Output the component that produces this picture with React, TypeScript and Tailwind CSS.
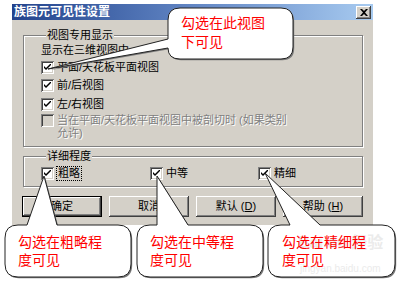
import React from "react";

const CJK = "font-['Liberation_Sans','Noto_Sans_CJK_SC',sans-serif]";

function Check({ on = true, disabled = false }: { on?: boolean; disabled?: boolean }) {
  return (
    <span
      className={`w-[13px] h-[13px] shrink-0 flex items-center justify-center shadow-[inset_1px_1px_0_#808080,inset_-1px_-1px_0_#fff,inset_2px_2px_0_#404040,inset_-2px_-2px_0_#d4d0c8] ${
        disabled ? "bg-[#d4d0c8]" : "bg-white"
      }`}
    >
      {on && (
        <svg width="7" height="7" viewBox="0 0 7 7">
          <path d="M0 2 L0 4 L2 6 L7 1 L7 -1 L2 4 Z" fill="#000" />
        </svg>
      )}
    </span>
  );
}

function Row({ label, h }: { label: string; h: string }) {
  return (
    <div className={`flex items-center gap-[3px] ${h}`}>
      <Check />
      <span>{label}</span>
    </div>
  );
}

function Btn({ children, def = false }: { children: React.ReactNode; def?: boolean }) {
  return (
    <div
      className={`w-[80px] h-[21px] flex items-center justify-center bg-[#d4d0c8] ${
        def
          ? "border border-black shadow-[inset_-1px_-1px_0_#404040,inset_1px_1px_0_#fff,inset_-2px_-2px_0_#808080]"
          : "shadow-[inset_-1px_-1px_0_#404040,inset_1px_1px_0_#fff,inset_-2px_-2px_0_#808080]"
      }`}
    >
      {children}
    </div>
  );
}

const callouts = [
  "M180 8 H281 Q293 8 293 20 V47 Q293 59 281 59 H180 Q168 59 168 48 L48 69 L168 39 V20 Q168 8 180 8 Z",
  "M18 225 H27 L44 176 L57 225 H118 Q131 225 131 238 V264 Q131 277 118 277 H18 Q5 277 5 264 V238 Q5 225 18 225 Z",
  "M150 225 H157 L157 176 L188 225 H250 Q263 225 263 238 V264 Q263 277 250 277 H150 Q137 277 137 264 V238 Q137 225 150 225 Z",
  "M281 225 H290 L265 173 L320 225 H382 Q395 225 395 238 V264 Q395 277 382 277 H281 Q268 277 268 264 V238 Q268 225 281 225 Z",
];

export default function App() {
  return (
    <div className={`relative w-[413px] h-[287px] bg-white overflow-hidden text-[11px] leading-[13px] text-black ${CJK}`}>
      {/* dialog */}
      <div className="ml-[12px] pt-[4px] w-[361px]">
        <div className="h-[221px] bg-[#d4d0c8] flex flex-col">
          <div className="h-[16px] flex items-center justify-between pl-[2px] pr-[2px] bg-gradient-to-r from-[#23438c] via-[#6286c4] to-[#a8cbf0]">
            <span className="text-white font-bold text-[12px] leading-[14px]">族图元可见性设置</span>
            <span className="w-[15px] h-[13px] flex items-center justify-center bg-[#d4d0c8] shadow-[inset_-1px_-1px_0_#404040,inset_1px_1px_0_#fff,inset_-2px_-2px_0_#808080]">
              <svg width="8" height="7" viewBox="0 0 8 7">
                <path d="M0 0 L2 0 L4 2 L6 0 L8 0 L5 3.5 L8 7 L6 7 L4 5 L2 7 L0 7 L3 3.5 Z" fill="#000" />
              </svg>
            </span>
          </div>

          <fieldset className="mt-[9px] ml-[11px] mr-[10px] h-[118px] border border-[#808080] shadow-[1px_1px_0_#fff,inset_1px_1px_0_#fff] pl-[17px] pr-[8px]">
            <legend className="ml-[5px] px-[1px] h-[13px] bg-[#d4d0c8]">视图专用显示</legend>
            <div className="flex items-center h-[16px]">显示在三维视图中</div>
            <Row label="平面/天花板平面视图" h="h-[18px]" />
            <Row label="前/后视图" h="h-[19px]" />
            <Row label="左/右视图" h="h-[18px]" />
            <div className="flex items-start gap-[3px] pt-[1px] text-[#808080] [text-shadow:1px_1px_0_#fff]">
              <Check on={false} disabled />
              <span>
                当在平面/天花板平面视图中被剖切时 (如果类别
                <br />
                允许)
              </span>
            </div>
          </fieldset>

          <fieldset className="mt-[3px] ml-[11px] mr-[10px] h-[37px] border border-[#808080] shadow-[1px_1px_0_#fff,inset_1px_1px_0_#fff] pl-[17px]">
            <legend className="ml-[5px] px-[1px] h-[13px] bg-[#d4d0c8]">详细程度</legend>
            <div className="flex items-center h-[18px] mt-[1px]">
              <div className="w-[109px] flex items-center gap-[2px]">
                <Check />
                <span className="border border-dotted border-black px-[1px] leading-[13px]">粗略</span>
              </div>
              <div className="w-[108px] flex items-center gap-[3px]">
                <Check />
                <span>中等</span>
              </div>
              <div className="flex items-center gap-[3px]">
                <Check />
                <span>精细</span>
              </div>
            </div>
          </fieldset>

          <div className="mt-[9px] ml-[10px] flex gap-[7px]">
            <Btn def>确定</Btn>
            <Btn>取消</Btn>
            <Btn>
              默认 (<u>D</u>)
            </Btn>
            <Btn>
              帮助 (<u>H</u>)
            </Btn>
          </div>
        </div>
      </div>

      {/* callout shapes */}
      <svg className="absolute inset-0 pointer-events-none" width="413" height="287" viewBox="0 0 413 287">
        {callouts.map((d, i) => (
          <g key={i}>
            <path d={d} fill="#777" transform="translate(1.2 1.2)" />
            <path d={d} fill="#fff" stroke="#222" strokeWidth="1" strokeLinejoin="round" />
          </g>
        ))}
      </svg>

      {/* watermark, faint under the callout text */}
      <div className="absolute left-[298px] top-[234px] text-[16px] leading-[18px] font-bold text-[#ebebeb]">Bai du 经验</div>
      <div className="absolute left-[300px] top-[263px] text-[10px] leading-[11px] text-[#ebebeb]">jingyan.baidu.com</div>

      {/* callout texts */}
      <div className="absolute left-[181px] top-[14px] text-[14px] leading-[19px] text-[#ff0000]">
        勾选在此视图
        <br />
        下可见
      </div>
      <div className="absolute left-[18px] top-[233px] text-[14px] leading-[18px] text-[#ff0000]">
        勾选在粗略程
        <br />
        度可见
      </div>
      <div className="absolute left-[150px] top-[233px] text-[14px] leading-[18px] text-[#ff0000]">
        勾选在中等程
        <br />
        度可见
      </div>
      <div className="absolute left-[282px] top-[233px] text-[14px] leading-[18px] text-[#ff0000]">
        勾选在精细程
        <br />
        度可见
      </div>
    </div>
  );
}
